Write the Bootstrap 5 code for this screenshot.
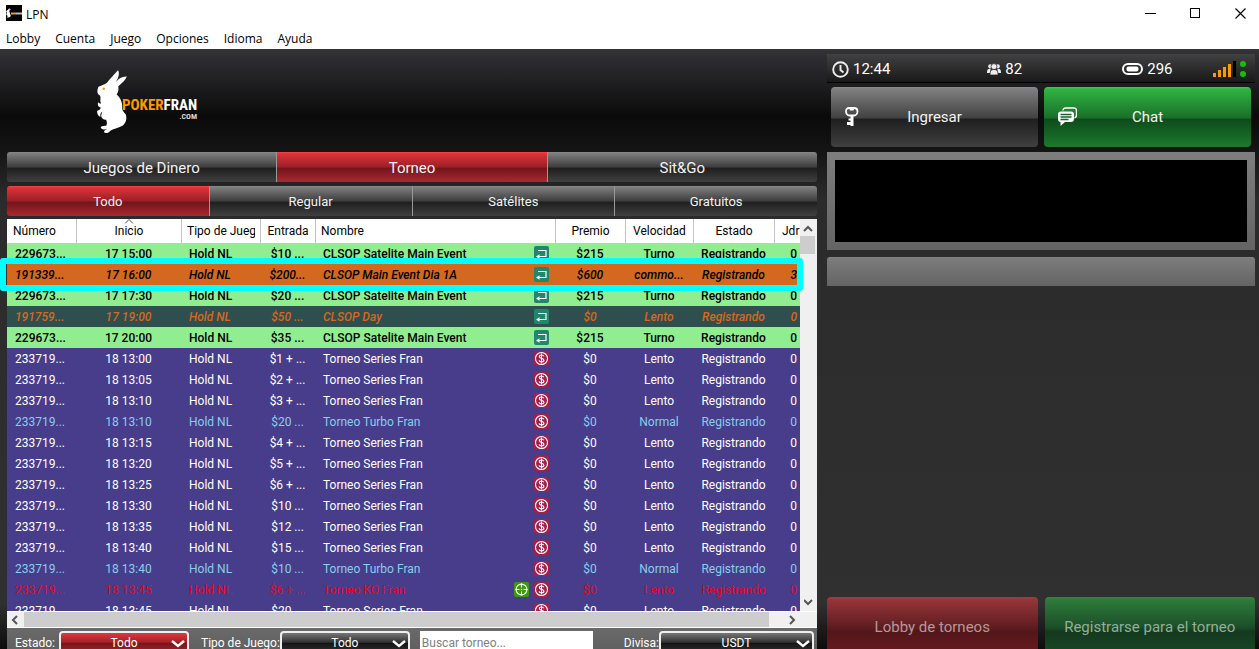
<!DOCTYPE html>
<html lang="es">
<head>
<meta charset="utf-8">
<meta name="viewport" content="width=device-width, initial-scale=1">
<title>LPN</title>
<link href="https://cdn.jsdelivr.net/npm/bootstrap@5.3.0/dist/css/bootstrap.min.css" rel="stylesheet">
<style>
body{font-family:Roboto,"Liberation Sans",sans-serif;font-size:12px;color:#fff;background:#2b2b2b}
.titlebar{height:26px;font-family:"Open Sans","Noto Sans",sans-serif;font-size:12px;color:#000}
.titlebar button{width:45px;height:26px;border:0;background:none;padding:0 0 0 8px;line-height:1}
.menubar{height:23px;font-family:"Open Sans","Noto Sans",sans-serif;font-size:12px;gap:15px;padding:2px 0 0 6px}
.menubar a{color:#000;text-decoration:none}
.lobby{display:grid;grid-template-columns:810fr 428fr;column-gap:10px;padding:0 4px 0 7px;min-height:0;
 background:linear-gradient(#333338 0,#0a0a0a 68px,#141414 100px,#2b2b2b 150px,#303030 calc(100% - 46px),#0c0c0c 100%)}
.logo-area{height:103px;flex:none;padding:21px 0 0 87px}
.tabs{height:30px;flex:none}
.tab{flex:1 1 0;border:0;border-left:1px solid #999;color:#f2f2f2;padding:2px 0 0;
 background:linear-gradient(#8a8a8a 0,#7d7d7d 5%,#3d3d3d 50%,#1f1f1f 54%,#404040 100%)}
.tab:first-child{border-left:0;border-radius:3px 0 0 3px}
.tab:last-child{border-radius:0 3px 3px 0}
.tab.on{background:linear-gradient(#f4474a 0,#dc3339 6%,#9b2026 50%,#72141a 54%,#ab2930 100%)}
.tabs-main{font-size:15px;margin-bottom:4px}
.tabs-sub{font-size:13px;margin-bottom:3px}
.grid-area{min-height:0;background:#f0f0f0}
.rows-view{min-height:0;background:#483d8b}
.tourneys{width:100%;table-layout:fixed;border-collapse:separate;border-spacing:0;line-height:16px}
.tourneys th{height:24px;padding:0 5px;font-weight:400;text-align:center;background:#fff;color:#000;border-left:1px solid #c4c4c4;white-space:nowrap;overflow:hidden}
.tourneys th:first-child{border-left:0;padding-left:6px}
.tourneys th:last-child{padding-left:7px;padding-right:0}
.tourneys td{height:21px;padding:0 7px;white-space:nowrap;overflow:hidden;text-align:center}
.tourneys td.lft{padding-left:8px;padding-right:6px}
.tourneys td:last-child{padding:0 3px;text-align:right}
.tourneys .lft{text-align:left}
.r-sat{background:#90ee90;color:#000;font-weight:500}
.r-main{background:#d2691e;color:#000;font-weight:500;font-style:italic}
.r-day{background:#2f4f4f;color:#d2691e;font-weight:500;font-style:italic}
.r-std{background:#483d8b;color:#fff}
.r-tur{background:#483d8b;color:#87ceeb}
.r-ko{background:#483d8b;color:#f00018}
.marker{left:-7px;right:-3px;top:39px;height:33px;border:6px solid #0ff;border-radius:3px;pointer-events:none;z-index:2}
.vbar{width:17px;flex:none;padding-top:1px}
.vthumb{height:18px;margin-right:2px;margin-top:16px;background:#cdcdcd}
.hbar{height:17px;flex:none;border-top:1px solid #fff;border-bottom:1px solid #fff}
.hthumb{flex:1;background:#cdcdcd}
.filters{height:21px;flex:none;background:linear-gradient(#6a6a6a,#606060);overflow:hidden;padding:3px 3px 0 8px}
.filters label{height:24px;line-height:24px;white-space:nowrap}
.filters select{appearance:none;height:24px;border:2px solid #eee;border-radius:4px;color:#fff;text-align:center;text-align-last:center;padding:0;
 background:url("data:image/svg+xml,%3Csvg xmlns='http://www.w3.org/2000/svg' width='14' height='8'%3E%3Cpath d='M1 1l6 5 6-5' fill='none' stroke='white' stroke-width='2.4'/%3E%3C/svg%3E") right 2px top 7px no-repeat,linear-gradient(#777 0,#333 46%,#151515 52%,#333 100%)}
.filters select.sel-on{background-image:url("data:image/svg+xml,%3Csvg xmlns='http://www.w3.org/2000/svg' width='14' height='8'%3E%3Cpath d='M1 1l6 5 6-5' fill='none' stroke='white' stroke-width='2.4'/%3E%3C/svg%3E"),linear-gradient(#e2383e 0,#a32228 46%,#78151b 52%,#a0262c 100%)}
.filters input{height:24px;border:0;background:#fff;padding:0 2px;min-width:0}
.filters input::placeholder{color:#808080}
.w-sel{width:130px}
.side{min-width:0;min-height:0;overflow:hidden;padding-top:5px}
.status{height:29px;flex:none;font-size:15px;background:linear-gradient(#414141,#191919);border-bottom:1px solid #000;padding:2px 8px 0 5px}
.gap-a{margin-left:97px}
.gap-b{margin-left:100px}
.big{flex:1 1 0;height:60px;border:0;border-radius:4px;color:#f2f2f2;font-size:15px;padding:0}
.big-gray{background:linear-gradient(#8c8c8c 0,#808080 3%,#424242 51%,#1f1f1f 54%,#404040 100%)}
.big-green{background:linear-gradient(#44c653 0,#2fb341 4%,#1a7029 51%,#0e4b1c 54%,#1c7a2d 100%)}
.big svg{left:14px;top:20px}
.video{height:98px;padding:8px;background:linear-gradient(#7e7e7e,#646464);margin-top:5px}
.plate{height:29px;margin-top:7px;border-radius:3px 3px 0 0;background:linear-gradient(#868686 0,#7c7c7c 5%,#646464 100%)}
.actions{height:52px;overflow:hidden;gap:7px}
.dim-red{color:#b99799;background:linear-gradient(#a5393d 0,#963539 5%,#5f1d21 50%,#53161a 58%,#6b1c21 100%)}
.dim-green{color:#93af99;background:linear-gradient(#338543 0,#2d7a3b 5%,#1c4f29 50%,#14391e 58%,#1b4a28 100%)}
</style>
</head>
<body>
<svg class="d-none">
 <symbol id="i-re" viewBox="0 0 15 15"><rect width="15" height="15" rx="2" fill="#20876c"/><path d="M4 4.500h8v6H5" fill="none" stroke="#fff" stroke-width="1.200"/><path d="M5.500 8.200v4.600l-3.500-2.300z" fill="#fff"/></symbol>
 <symbol id="i-usd" viewBox="0 0 15 15"><rect width="15" height="15" rx="2" fill="#a32048"/><circle cx="7.5" cy="7.5" r="6" fill="none" stroke="#fff" stroke-width="1.1"/><path d="M9.800 5.300c-.4-1-1.200-1.300-2.300-1.300-1.300 0-2.200.6-2.200 1.600 0 2.500 4.600 1.100 4.600 3.600 0 1.100-1 1.700-2.400 1.700-1.300 0-2.200-.5-2.500-1.500M7.500 2.500v10" fill="none" stroke="#fff" stroke-width="1.100"/></symbol>
 <symbol id="i-ko" viewBox="0 0 15 15"><rect width="15" height="15" rx="2" fill="#3d980f"/><circle cx="7.500" cy="7.500" r="5.400" fill="none" stroke="#fff" stroke-width="1.100"/><path d="M7.500 1.500v4M7.500 9.500v4M1.500 7.500h4M9.500 7.500h4" stroke="#fff" stroke-width="1.100"/><circle cx="7.500" cy="7.500" r=".8" fill="#fff"/></symbol>
 <symbol id="rabbit" viewBox="36 28 92 194"><path fill="#fff" d="M100 29C106 36 102 53 94 64 102 54 113 47 127 48 123 59 113 68 101 77 103 90 100 97 96 102 108 111 114 127 113 144 113 150 117 156 124 163 128 176 124 189 115 196 103 203 88 205 77 212 72 220 62 221 58 217 56 212 62 210 68 207 60 210 50 208 48 203 49 196 58 198 65 196 68 191 66 183 64 178 58 180 54 176 50 171 48 167 51 158 53 154 47 158 46 162 47 170 40 168 36 158 37 152 43 149 49 147 47 141 42 142 37 134 40 126 44 130 51 134 47 124 46 114 50 107 42 103 36 99 37 88 41 79 51 74 66 72 72 60 82 39 100 29Z"/><circle cx="57" cy="85" r="4" fill="#f59a1a"/></symbol>
</svg>
<div class="vh-100 d-flex flex-column overflow-hidden">
 <header class="bg-white">
  <div class="titlebar d-flex align-items-center">
   <svg class="ms-1" width="18" height="16" viewBox="0 0 18 16"><rect x="2" width="16" height="16" fill="#000"/><use href="#rabbit" x="2" y="3" width="5" height="10"/><path d="M7 8.500h5" stroke="#f59a1a" stroke-width="2"/><path d="M12 8.500h6" stroke="#bbb" stroke-width="2"/></svg>
   <span class="ms-1 pt-1">LPN</span>
   <div class="ms-auto d-flex">
    <button aria-label="Minimizar"><svg width="11" height="11"><path d="M0 5.500h11" stroke="#000"/></svg></button>
    <button aria-label="Maximizar"><svg width="11" height="11"><rect x=".5" y=".5" width="9" height="9" fill="none" stroke="#000"/></svg></button>
    <button aria-label="Cerrar"><svg width="11" height="11"><path d="M.5.500l10 10M10.500.500l-10 10" stroke="#000" stroke-width="1.200"/></svg></button>
   </div>
  </div>
  <nav class="menubar d-flex align-items-center"><a href="#">Lobby</a><a href="#">Cuenta</a><a href="#">Juego</a><a href="#">Opciones</a><a href="#">Idioma</a><a href="#">Ayuda</a></nav>
 </header>
 <main class="lobby flex-grow-1">
  <section class="d-flex flex-column" style="min-width:0;min-height:0">
   <div class="logo-area">
    <svg width="112" height="66" viewBox="0 0 112 66" role="img" aria-label="PokerFran.com"><use href="#rabbit" x="2" y="0" width="32" height="64"/>
     <g font-family="'Liberation Sans Narrow','Roboto Condensed',Roboto,sans-serif" font-weight="700"><text x="28" y="40" font-size="15" fill="#f90">POKER<tspan fill="#fff">FRAN</tspan></text><text x="103" y="49" font-size="8" fill="#ddd" text-anchor="end">.COM</text></g></svg>
   </div>
   <div class="tabs tabs-main d-flex"><button class="tab">Juegos de Dinero</button><button class="tab on">Torneo</button><button class="tab">Sit&amp;Go</button></div>
   <div class="tabs tabs-sub d-flex"><button class="tab on">Todo</button><button class="tab">Regular</button><button class="tab">Satélites</button><button class="tab">Gratuitos</button></div>
   <div class="grid-area flex-grow-1 d-flex flex-column">
    <div class="d-flex flex-grow-1" style="min-height:0">
     <div class="position-relative flex-grow-1 d-flex flex-column" style="min-width:0">
      <div class="rows-view flex-grow-1 overflow-hidden">
       <table class="tourneys">
        <colgroup><col width="69"><col width="105"><col width="79"><col width="55"><col><col width="70"><col width="68"><col width="81"><col width="26"></colgroup>
        <thead><tr><th class="lft">Número</th><th class="position-relative">Inicio<svg class="position-absolute top-0 start-50 translate-middle-x" width="9" height="5"><path d="M.5 4.500l4-4 4 4" fill="none" stroke="#555"/></svg></th><th class="lft"><div class="overflow-hidden">Tipo de Juego</div></th><th>Entrada</th><th class="lft">Nombre</th><th>Premio</th><th>Velocidad</th><th>Estado</th><th class="lft">Jdr</th></tr></thead>
        <tbody id="rows"></tbody>
       </table>
      </div>
      <div class="marker position-absolute"></div>
     </div>
     <div class="vbar d-flex flex-column justify-content-between position-relative">
      <div class="vthumb"></div>
      <svg class="position-absolute" style="top:6px;left:3px" width="10" height="7"><path d="M1 6l4-4 4 4" fill="none" stroke="#555" stroke-width="2"/></svg>
      <svg class="mb-1 ms-1" width="10" height="8"><path d="M0 1l4 4 4-4" fill="none" stroke="#555" stroke-width="2"/></svg>
     </div>
    </div>
    <div class="hbar d-flex align-items-center">
     <svg width="17" height="10"><path d="M10 1L6 5l4 4" fill="none" stroke="#555" stroke-width="2"/></svg>
     <div class="hthumb h-100"></div>
     <svg width="48" height="10"><path d="M21 1l4 4-4 4" fill="none" stroke="#555" stroke-width="2"/></svg>
    </div>
   </div>
   <div class="filters d-flex">
    <label for="fe" class="me-1">Estado:</label><select id="fe" class="w-sel sel-on"><option>Todo</option></select>
    <label for="ft" class="ps-2 ms-1">Tipo de Juego:</label><select id="ft" class="w-sel"><option>Todo</option></select>
    <input type="text" placeholder="Buscar torneo..." aria-label="Buscar torneo" style="width:173px;margin-left:10px">
    <label for="fd" class="ms-auto">Divisa:</label><select id="fd" style="width:155px"><option>USDT</option></select>
   </div>
  </section>
  <aside class="side d-flex flex-column">
   <div class="status d-flex align-items-center">
    <span class="d-flex align-items-center gap-1"><svg width="17" height="17" viewBox="0 0 17 17" fill="none" stroke="#eee" stroke-width="1.900"><circle cx="8.500" cy="8.500" r="7.300"/><path d="M8.500 4v5l3 2.500"/></svg>12:44</span>
    <span class="d-flex align-items-center gap-1 gap-a"><svg width="14" height="12" viewBox="0 0 14 12" fill="#eee"><circle cx="3.200" cy="3.200" r="2"/><circle cx="10.800" cy="3.200" r="2"/><path d="M0 9.500C0 6.500 1 5.500 3.500 5.500V10H0zM14 9.500c0-3-1-4-3.500-4V10H14z"/><g stroke="#2c2c2c" stroke-width=".8"><path d="M3 12c0-4 1-5.500 4-5.500s4 1.500 4 5.500z"/><circle cx="7" cy="3.600" r="3"/></g></svg>82</span>
    <span class="d-flex align-items-center gap-1 gap-b"><svg width="21" height="12" viewBox="0 0 21 12"><rect x="1" y="1" width="19" height="10" rx="5" fill="none" stroke="#fff" stroke-width="2"/><rect x="4.500" y="3.500" width="12" height="5" rx="2" fill="#fff"/></svg>296</span>
    <svg class="ms-auto" width="34" height="17" viewBox="0 0 34 17"><path fill="#f90" d="M0 12h3v4H0zM5 9h3v7H5zM10 6h3v10h-3zM15 3h3v13h-3z"/><path fill="#000" d="M20 0h3v16h-3z"/><g fill="#12c00c"><circle cx="30" cy="3" r="3"/><circle cx="30" cy="13" r="3"/></g></svg>
   </div>
   <div class="d-flex px-1 pt-1" style="column-gap:6px">
    <button class="big big-gray position-relative"><svg class="position-absolute" width="14" height="19" viewBox="0 0 14 19"><path fill="none" stroke="#fff" stroke-width="1.800" d="M4 1h5c2 0 3.500 1.500 3.500 3.500S11 8.500 9 8.500H4.500C2.500 8.500 1 6.500 1 4.500S2 1 4 1z"/><path fill="#fff" d="M4 1l1 2.500h3.500L9.500 1zM5.500 8h3v11H5.500v-1H2v-3h3.500v-1.500H3.500v-2h2z"/></svg>Ingresar</button>
    <button class="big big-green position-relative"><svg class="position-absolute" width="19" height="20" viewBox="0 0 19 20"><path fill="none" stroke="#fff" stroke-width="1.400" d="M5 3.500C5 2 6 1 7.500 1H16c1.500 0 2.500 1 2.500 2.500V8c0 2-.5 2.500-2 3"/><path fill="#fff" d="M3 4.500h10c2 0 3 1 3 3V12c0 2-1 3-3 3H7l-4.500 4V15C1 15 0 14 0 12V7.500c0-2 1-3 3-3z"/><path stroke="#17632a" stroke-width="1.300" d="M2.500 7.500h11M2.500 10h11M2.500 12.500h8"/></svg>Chat</button>
   </div>
   <div class="video"><div class="bg-black h-100"></div></div>
   <div class="plate"></div>
   <div class="actions d-flex mt-auto"><button class="big dim-red">Lobby de torneos</button><button class="big dim-green">Registrarse para el torneo</button></div>
  </aside>
 </main>
</div>
<script src="https://cdn.jsdelivr.net/npm/bootstrap@5.3.0/dist/js/bootstrap.bundle.min.js"></script>
<script>
const S='CLSOP Satelite Main Event',F='Torneo Series Fran',T='Torneo Turbo Fran';
const data=[
['sat','229673...','17 15:00','$10 ...',S,'$215','Turno',0],
['main','191339...','17 16:00','$200...','CLSOP Main Event Dia 1A','$600','commo...',3],
['sat','229673...','17 17:30','$20 ...',S,'$215','Turno',0],
['day','191759...','17 19:00','$50 ...','CLSOP Day','$0','Lento',0],
['sat','229673...','17 20:00','$35 ...',S,'$215','Turno',0],
...[['18 13:00','$1 + ...'],['18 13:05','$2 + ...'],['18 13:10','$3 + ...'],['18 13:10','$20 ...','tur'],['18 13:15','$4 + ...'],['18 13:20','$5 + ...'],['18 13:25','$6 + ...'],['18 13:30','$10 ...'],['18 13:35','$12 ...'],['18 13:40','$15 ...'],['18 13:40','$10 ...','tur'],['18 13:45','$6 + ...','ko'],['18 13:45','$20 ...']]
 .map(([d,e,k='std'])=>[k,'233719...',d,e,k=='tur'?T:k=='ko'?'Torneo KO Fran':F,'$0',k=='tur'?'Normal':'Lento',0])];
const icon=n=>`<svg width="15" height="15"><use href="#i-${n}"/></svg>`;
document.getElementById('rows').innerHTML=data.map(([k,n,d,e,name,p,v,j])=>{
 const ic=['sat','main','day'].includes(k)?icon('re'):(k=='ko'?icon('ko'):'')+icon('usd');
 return `<tr class="r-${k}"><td class="lft">${n}</td><td>${d}</td><td class="lft">Hold NL</td><td>${e}</td><td class="lft"><div class="d-flex align-items-center"><span class="me-auto">${name}</span><span class="d-flex" style="gap:5px">${ic}</span></div></td><td>${p}</td><td>${v}</td><td>Registrando</td><td>${j}</td></tr>`}).join('');
</script>
</body>
</html>
